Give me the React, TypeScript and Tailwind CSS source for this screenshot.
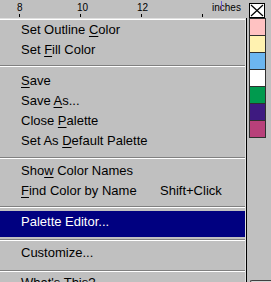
type Row =
  | { kind: "item"; label: string; key?: number; hint?: string; active?: boolean }
  | { kind: "sep"; className: string };

const rows: Row[] = [
  { kind: "item", label: "Set Outline Color", key: 12 },
  { kind: "item", label: "Set Fill Color", key: 4 },
  { kind: "sep", className: "pt-[5px] pb-[4px]" },
  { kind: "item", label: "Save", key: 0 },
  { kind: "item", label: "Save As...", key: 5 },
  { kind: "item", label: "Close Palette", key: 6 },
  { kind: "item", label: "Set As Default Palette", key: 7 },
  { kind: "sep", className: "pt-[6px] pb-[2px]" },
  { kind: "item", label: "Show Color Names", key: 3 },
  { kind: "item", label: "Find Color by Name", key: 0, hint: "Shift+Click" },
  { kind: "sep", className: "pt-[5px] pb-[3px]" },
  { kind: "item", label: "Palette Editor...", active: true },
  { kind: "sep", className: "pt-[2px] pb-[2px]" },
  { kind: "item", label: "Customize..." },
  { kind: "sep", className: "pt-[7px] pb-[1px]" },
  { kind: "item", label: "What's This?" },
];

const swatches = ["#ffc2c2", "#fff2b0", "#6cb6f0", "#ffffff", "#009a4e", "#3e1a80", "#b8407a"];

function Label({ text, at }: { text: string; at?: number }) {
  if (at === undefined) return <span>{text}</span>;
  return (
    <span>
      {text.slice(0, at)}
      <span className="underline underline-offset-[2px]">{text[at]}</span>
      {text.slice(at + 1)}
    </span>
  );
}

function Ruler() {
  return (
    <div className="relative h-[18px] shrink-0 bg-[#c0c0c0] text-[10px] leading-none text-black">
      <span className="absolute left-[17px] top-[3px]">8</span>
      <span className="absolute left-[77px] top-[3px]">10</span>
      <span className="absolute left-[137px] top-[3px]">12</span>
      <span className="absolute left-[212px] top-[3px]">inches</span>
      <span className="absolute left-[221px] top-[1px] h-[8px] w-px bg-[#6a5ad0]" />
      <span className="absolute left-[19px] top-[14px] h-[3px] w-px bg-black" />
      <span className="absolute left-[80px] top-[14px] h-[3px] w-px bg-black" />
      <span className="absolute left-[141px] top-[14px] h-[3px] w-px bg-black" />
      <span className="absolute left-[202px] top-[14px] h-[3px] w-px bg-black" />
    </div>
  );
}

function Menu() {
  return (
    <div className="min-h-0 flex-1 overflow-hidden border-r border-[#dfdfdf] bg-[#c0c0c0] text-[13px] leading-[20px] text-black">
      <div className="h-px bg-[#dfdfdf]" />
      <div className="h-px bg-white" />
      {rows.map((row, i) =>
        row.kind === "sep" ? (
          <div key={i} className={row.className}>
            <div className="h-px bg-[#808080]" />
            <div className="h-px bg-white" />
          </div>
        ) : row.active ? (
          <div key={i} className="h-[26px] bg-[#000080] pl-[21px] pt-px text-white">
            <Label text={row.label} at={row.key} />
          </div>
        ) : (
          <div key={i} className="flex h-[20px] pl-[21px]">
            <span className="w-[139px]">
              <Label text={row.label} at={row.key} />
            </span>
            {row.hint && <span>{row.hint}</span>}
          </div>
        ),
      )}
    </div>
  );
}

function Palette() {
  return (
    <div className="flex w-[25px] flex-col bg-[#c0c0c0]">
      <div className="h-[18px] shrink-0 pl-[3px] pt-[3px]">
        <svg width="16" height="15" viewBox="0 0 16 15" className="block">
          <rect x="0.5" y="0.5" width="15" height="14" fill="#fff" stroke="#000" />
          <path d="M2 2 L14 13 M14 2 L2 13" stroke="#000" strokeWidth="1.2" />
        </svg>
      </div>
      <div className="flex min-h-0 flex-1 flex-col border-l border-black pl-[2px]">
        <div className="w-[17px] border-t border-[#303030]">
          {swatches.map((c) => (
            <div
              key={c}
              className="h-[17px] border-x border-b border-[#303030]"
              style={{ backgroundColor: c }}
            />
          ))}
        </div>
        <div className="mt-auto ml-[1px] h-[2px] rounded-tl-[3px] border-l border-t border-[#404040] bg-[#d4d4d4]" />
      </div>
    </div>
  );
}

export default function App() {
  return (
    <div className="flex h-[282px] w-[271px] overflow-hidden bg-[#c0c0c0] font-['Liberation_Sans',Arial,sans-serif]">
      <div className="flex w-[246px] flex-col">
        <Ruler />
        <Menu />
      </div>
      <Palette />
    </div>
  );
}
